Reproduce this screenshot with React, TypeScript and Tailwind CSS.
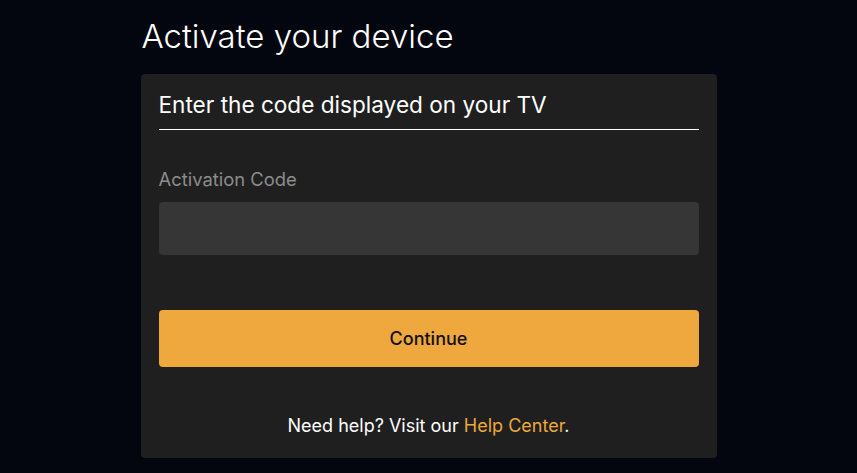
import React from "react";

export default function App() {
  return (
    <div className="min-h-[473px] w-full bg-[#03060f] font-['Inter',sans-serif]">
      <div className="mx-auto w-[576px] pt-[14px]">
        <h1 className="text-[33px] font-light leading-[44px] text-white pl-[1px]">Activate your device</h1>
        <div className="mt-[16px] rounded-[4px] bg-[#1f1f1f] px-[18px] pt-[18px] pb-[20px]">
          <h2 className="border-b border-white pb-[12px] text-[22.6px] leading-[25px] text-white">Enter the code displayed on your TV</h2>
          <label className="mt-[38px] block text-[18.4px] leading-[22px] text-[#8c8c8c]">Activation Code</label>
          <input className="mt-[12px] block h-[53px] w-full rounded-[4px] bg-[#363636] px-3 text-white outline-none" />
          <button className="mt-[55px] flex h-[57px] w-full items-center justify-center rounded-[4px] bg-[#eea83e] text-[18px] font-medium text-[#111]">Continue</button>
          <p className="mt-[47px] text-center text-[18px] leading-[24px] text-white">
            Need help? Visit our <a className="text-[#eea83e]">Help Center</a>.
          </p>
        </div>
      </div>
    </div>
  );
}
